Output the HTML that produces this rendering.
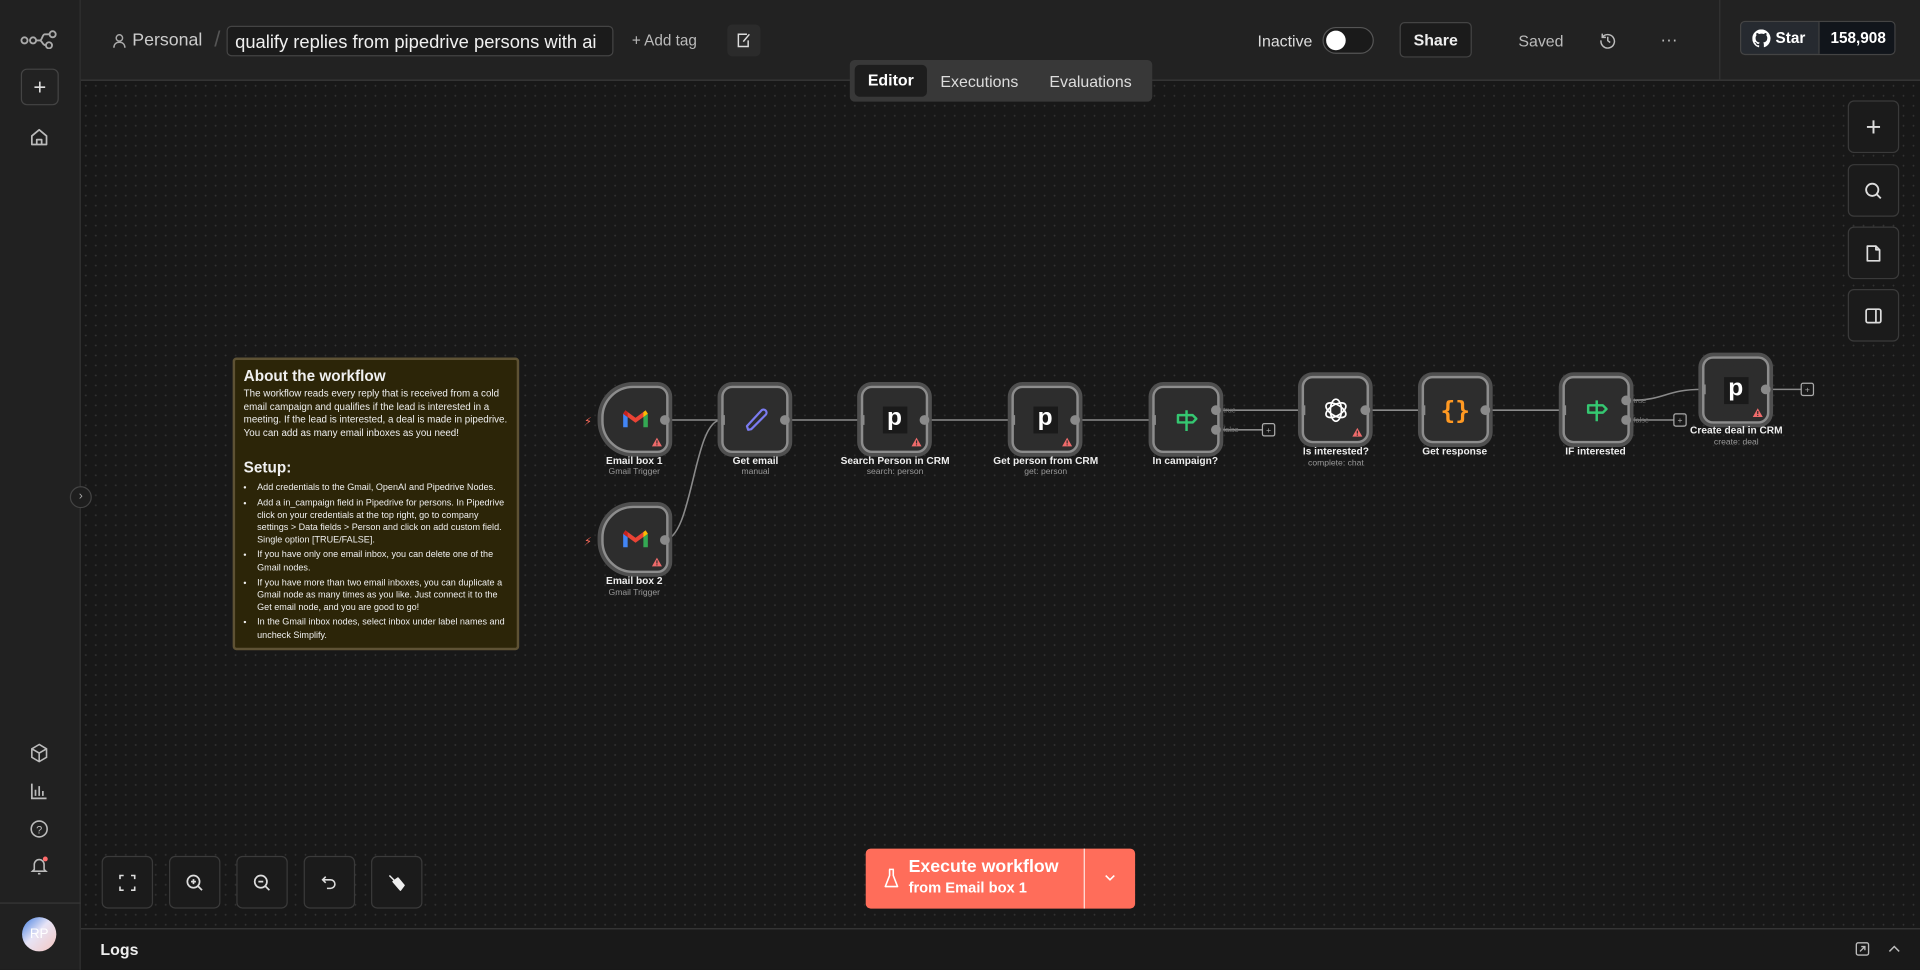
<!DOCTYPE html>
<html><head><meta charset="utf-8"><style>
*{box-sizing:border-box;margin:0;padding:0}
html,body{width:1920px;height:970px;overflow:hidden;background:#181818;font-family:"Liberation Sans",sans-serif;color:#ddd}
.s{position:absolute;left:0;top:0;width:1568px;height:792px;transform:scale(1.22449);transform-origin:0 0}
.a{position:absolute}
.side{left:0;top:0;width:66px;height:792px;background:#212121;border-right:1px solid #333}
.hdr{left:66px;top:0;width:1502px;height:66px;background:#222;border-bottom:1px solid #3a3a3a}
.canvas{left:66px;top:66px;width:1502px;height:692px;background-color:#181818;background-image:radial-gradient(circle,#333 0.6px,transparent 0.8px);background-size:8.166px 8.166px}
.btn{position:absolute;border:1px solid #3a3a3a;border-radius:5px;background:#1b1b1b;display:flex;align-items:center;justify-content:center}
.node{position:absolute;width:55px;height:55px;border-radius:9px;background:#2d2d2d;border:2px solid #8d8d8d;box-shadow:0 0 0 3px #4f4f4f;display:flex;align-items:center;justify-content:center}
.trig{border-radius:26px 9px 9px 26px}
.lbl{position:absolute;width:160px;text-align:center;font-size:8.3px;font-weight:bold;color:#eee}
.sub{position:absolute;width:160px;text-align:center;font-size:7px;color:#999}
.warn{position:absolute;right:3px;bottom:3px}
.pp{width:20px;height:22px;background:#1a1a1a;color:#fff;font-weight:bold;font-size:20px;line-height:19px;text-align:center;font-family:"Liberation Sans",sans-serif}
</style></head><body><div class="s">

<div class="a canvas"></div>

<!-- sidebar -->
<div class="a side">
 <svg class="a" style="left:16px;top:24px" width="32" height="16" viewBox="0 0 32 16"><g fill="none" stroke="#aaa" stroke-width="1.5"><circle cx="4" cy="9" r="2.5"/><circle cx="11" cy="9" r="2.5"/><circle cx="27" cy="4" r="2.5"/><circle cx="24" cy="13" r="2.5"/><path d="M13.5 9h3c2 0 2-5 4-5h4M16.5 9c2 0 2 4 5 4"/></g></svg>
 <div class="btn" style="left:17px;top:56px;width:31px;height:30px;background:#222;border-color:#444"><span style="font-size:18px;color:#ddd;line-height:1">+</span></div>
 <svg class="a" style="left:24px;top:104px" width="16" height="16" viewBox="0 0 16 16"><path d="M2 7L8 2l6 5v7H2z M6 14V10h4v4" fill="none" stroke="#bbb" stroke-width="1.4" stroke-linejoin="round"/></svg>
 <svg class="a" style="left:24px;top:607px" width="16" height="16" viewBox="0 0 16 16"><path d="M8 1l6 3.5v7L8 15 2 11.5v-7z M2 4.5L8 8l6-3.5M8 8v7" fill="none" stroke="#bbb" stroke-width="1.3"/></svg>
 <svg class="a" style="left:24px;top:638px" width="16" height="16" viewBox="0 0 16 16"><path d="M2 2v12h12M5 12V7M8 12V4M11 12V8" fill="none" stroke="#bbb" stroke-width="1.4"/></svg>
 <svg class="a" style="left:24px;top:669px" width="16" height="16" viewBox="0 0 16 16"><circle cx="8" cy="8" r="6.5" fill="none" stroke="#bbb" stroke-width="1.3"/><text x="8" y="11.5" font-size="9" text-anchor="middle" fill="#bbb" font-family="Liberation Sans">?</text></svg>
 <svg class="a" style="left:24px;top:699px" width="16" height="16" viewBox="0 0 16 16"><path d="M4 11V7a4 4 0 018 0v4l1.5 1.5h-11z M7 14.5h2" fill="none" stroke="#bbb" stroke-width="1.3"/><circle cx="13" cy="2.5" r="2" fill="#ff6b6b"/></svg>
 <div class="a" style="left:0;top:737px;width:66px;height:1px;background:#383838"></div>
 <div class="a" style="left:18px;top:749px;width:28px;height:28px;border-radius:50%;background:linear-gradient(135deg,#3f7ce0 0%,#e7e4f6 45%,#f4c6c0 100%);color:#fff;font-size:11px;display:flex;align-items:center;justify-content:center">RP</div>
 <div class="a" style="left:57px;top:397px;width:18px;height:18px;border-radius:50%;background:#1e1e1e;border:1px solid #444;color:#aaa;font-size:10px;text-align:center;line-height:15px">›</div>
</div>

<!-- header -->
<div class="a hdr">
 <svg class="a" style="left:26px;top:27px" width="11" height="13" viewBox="0 0 11 13"><circle cx="5.5" cy="4" r="2.6" fill="none" stroke="#aaa" stroke-width="1.2"/><path d="M1 12c0-3 2-4.5 4.5-4.5S10 9 10 12" fill="none" stroke="#aaa" stroke-width="1.2"/></svg>
 <div class="a" style="left:42px;top:25px;font-size:14.5px;color:#ccc">Personal</div>
 <div class="a" style="left:109px;top:22px;font-size:18px;color:#555">/</div>
 <div class="a" style="left:119px;top:21px;width:316px;height:25px;border:1px solid #444;border-radius:4px;background:#1b1b1b;font-size:15px;color:#f0f0f0;padding:4px 0 0 6px;white-space:nowrap;overflow:hidden">qualify replies from pipedrive persons with ai</div>
 <div class="a" style="left:450px;top:26px;font-size:12.5px;color:#bbb">+ Add tag</div>
 <div class="a" style="left:528px;top:20px;width:27px;height:26px;border-radius:4px;background:#2b2b2b"><svg style="position:absolute;left:7px;top:6px" width="13" height="14" viewBox="0 0 13 14"><path d="M9 2H2v10h8V7 M6 8l5-6" fill="none" stroke="#ddd" stroke-width="1.2"/></svg></div>
 <div class="a" style="left:961px;top:26px;font-size:13px;color:#ddd">Inactive</div>
 <div class="a" style="left:1014px;top:22px;width:42px;height:22px;border-radius:11px;background:#1a1a1a;border:1px solid #555"><div style="position:absolute;left:2px;top:2px;width:16px;height:16px;border-radius:50%;background:#fff"></div></div>
 <div class="a" style="left:1077px;top:18px;width:59px;height:29px;border:1px solid #444;border-radius:4px;background:#1b1b1b;font-size:13px;font-weight:bold;color:#eee;text-align:center;line-height:27px">Share</div>
 <div class="a" style="left:1174px;top:26px;font-size:13px;color:#bbb">Saved</div>
 <svg class="a" style="left:1240px;top:26px" width="14" height="14" viewBox="0 0 14 14"><path d="M2.5 4.5A5.5 5.5 0 1 1 1.5 7 M2.5 1.5v3h3 M7 4v3.2l2 1.5" fill="none" stroke="#bbb" stroke-width="1.2"/></svg>
 <div class="a" style="left:1290px;top:24px;font-size:14px;color:#bbb">···</div>
 <div class="a" style="left:1338px;top:0;width:1px;height:66px;background:#333"></div>
 <div class="a" style="left:1355px;top:17px;width:127px;height:28px;border:1px solid #444;border-radius:4px;background:#262a30;overflow:hidden">
  <svg style="position:absolute;left:9px;top:6px" width="15" height="15" viewBox="0 0 16 16"><path fill="#fff" d="M8 0a8 8 0 0 0-2.5 15.6c.4 0 .5-.2.5-.4v-1.5c-2.2.5-2.7-1-2.7-1-.4-.9-.9-1.2-.9-1.2-.7-.5.1-.5.1-.5.8.1 1.2.8 1.2.8.7 1.3 1.9.9 2.3.7.1-.5.3-.9.5-1.1-1.8-.2-3.6-.9-3.6-4 0-.9.3-1.6.8-2.1-.1-.2-.4-1 .1-2.1 0 0 .7-.2 2.2.8a7.5 7.5 0 0 1 4 0c1.5-1 2.2-.8 2.2-.8.4 1.1.2 1.9.1 2.1.5.6.8 1.3.8 2.1 0 3.1-1.9 3.8-3.6 4 .3.3.6.8.6 1.5v2.2c0 .2.1.5.6.4A8 8 0 0 0 8 0z"/></svg>
  <div style="position:absolute;left:28px;top:6px;font-size:12.5px;font-weight:bold;color:#fff">Star</div>
  <div style="position:absolute;left:63px;top:0;width:64px;height:28px;background:#11151b;border-left:1px solid #444;font-size:12.5px;font-weight:bold;color:#fff;text-align:center;line-height:27px">158,908</div>
 </div>
</div>

<!-- tabs -->
<div class="a" style="left:694px;top:49px;width:247px;height:34px;background:#383838;border-radius:4px">
 <div class="a" style="left:4px;top:4px;width:59px;height:26px;background:#1d1d1d;border-radius:4px;font-size:13px;font-weight:bold;color:#fff;text-align:center;line-height:26px">Editor</div>
 <div class="a" style="left:74px;top:10px;font-size:13px;color:#ddd">Executions</div>
 <div class="a" style="left:163px;top:10px;font-size:13px;color:#ddd">Evaluations</div>
</div>

<!-- right tools -->
<div class="btn" style="left:1509px;top:82px;width:42px;height:43px"><span style="font-size:22px;color:#ddd">+</span></div>
<div class="btn" style="left:1509px;top:134px;width:42px;height:43px"><svg width="16" height="16" viewBox="0 0 16 16"><circle cx="7" cy="7" r="5" fill="none" stroke="#ddd" stroke-width="1.5"/><path d="M10.5 10.5L14 14" stroke="#ddd" stroke-width="1.5"/></svg></div>
<div class="btn" style="left:1509px;top:185px;width:42px;height:43px"><svg width="16" height="16" viewBox="0 0 16 16"><path d="M3 2h7l3 3v9H3z M10 2v3h3" fill="none" stroke="#ddd" stroke-width="1.4" stroke-linejoin="round"/></svg></div>
<div class="btn" style="left:1509px;top:236px;width:42px;height:43px"><svg width="16" height="16" viewBox="0 0 16 16"><rect x="2" y="2.5" width="12" height="11" rx="1.5" fill="none" stroke="#ddd" stroke-width="1.4"/><path d="M10 2.5v11" stroke="#ddd" stroke-width="1.4"/></svg></div>

<!-- sticky -->
<div class="a" style="left:190px;top:292px;width:234px;height:239px;background:#2c2508;border:2px solid #5e5234;border-radius:3px;padding:6px 7px;color:#f0f0f0;overflow:hidden">
 <div style="font-size:12.5px;font-weight:bold">About the workflow</div>
 <div style="font-size:8px;line-height:10.6px;margin-top:3px">The workflow reads every reply that is received from a cold email campaign and qualifies if the lead is interested in a meeting. If the lead is interested, a deal is made in pipedrive. You can add as many email inboxes as you need!</div>
 <div style="font-size:12.5px;font-weight:bold;margin-top:16px">Setup:</div>
 <ul style="font-size:7.4px;line-height:10.2px;margin:4px 0 0 11px">
  <li style="margin-bottom:2px">Add credentials to the Gmail, OpenAI and Pipedrive Nodes.</li>
  <li style="margin-bottom:2px">Add a in_campaign field in Pipedrive for persons. In Pipedrive click on your credentials at the top right, go to company settings &gt; Data fields &gt; Person and click on add custom field. Single option [TRUE/FALSE].</li>
  <li style="margin-bottom:2px">If you have only one email inbox, you can delete one of the Gmail nodes.</li>
  <li style="margin-bottom:2px">If you have more than two email inboxes, you can duplicate a Gmail node as many times as you like. Just connect it to the Get email node, and you are good to go!</li>
  <li>In the Gmail inbox nodes, select inbox under label names and uncheck Simplify.</li>
 </ul>
</div>

<!-- connections -->
<svg class="a" style="left:0;top:0" width="1568" height="792" viewBox="0 0 1568 792">
 <g stroke="#8a8a8a" stroke-width="1.3" fill="none">
  <path d="M546 343H589"/><path d="M542 441C566 441 566 343 589 343"/>
  <path d="M644 343H703"/><path d="M758 343H826"/><path d="M881 343H941"/>
  <path d="M996 335H1063"/><path d="M996 351H1031"/>
  <path d="M1118 335H1161"/><path d="M1216 335H1276"/>
  <path d="M1331 327C1360 327 1360 318 1390 318"/><path d="M1331 343H1367"/>
  <path d="M1445 318H1471"/>
 </g>
 <g fill="none" stroke="#aaa" stroke-width="1"><rect x="1031" y="346" width="10" height="10" rx="1.5"/><rect x="1367" y="338" width="10" height="10" rx="1.5"/><rect x="1471" y="313" width="10" height="10" rx="1.5"/></g>
 <g fill="#aaa" font-size="7" font-family="Liberation Sans" text-anchor="middle"><text x="1036" y="353.5">+</text><text x="1372" y="345.5">+</text><text x="1476" y="320.5">+</text></g>
 <g fill="#777" font-size="6" font-family="Liberation Sans"><text x="999" y="337">true</text><text x="999" y="353">false</text><text x="1334" y="329">true</text><text x="1334" y="345">false</text></g>
 <g fill="#ff6b5b" font-size="9" font-family="DejaVu Sans"><text x="477" y="347">⚡</text><text x="477" y="445">⚡</text></g>
</svg>

<!-- nodes -->
<svg width="0" height="0" style="position:absolute"><defs>
 <symbol id="gm" viewBox="0 0 24 18"><path d="M1 4v12h4V7z" fill="#4285f4"/><path d="M19 7v9h4V4z" fill="#34a853"/><path d="M1 4l11 8 11-8-2-3-9 6.5L3 1z" fill="#ea4335"/><path d="M19 7l4-3-2-3-2 1.5z" fill="#fbbc04"/><path d="M1 4l4 3V2.5L3 1z" fill="#c5221f"/></symbol>
 <symbol id="wn" viewBox="0 0 10 9"><path d="M5 0.5L9.6 8.5H0.4z" fill="#f06b6b"/><path d="M5 3v2.8" stroke="#2d2d2d" stroke-width="1.1"/><circle cx="5" cy="7.1" r="0.6" fill="#2d2d2d"/></symbol>
 <symbol id="sg" viewBox="0 0 22 22"><path d="M11 3v17 M4 7h12l3 3-3 3H4z" fill="none" stroke="#35c771" stroke-width="2" stroke-linejoin="round"/></symbol>
</defs></svg>

<div class="node trig" style="left:491px;top:315px"><svg width="22" height="17"><use href="#gm"/></svg><svg class="warn" width="9" height="8"><use href="#wn"/></svg></div>
<div class="lbl" style="left:438px;top:371px">Email box 1</div><div class="sub" style="left:438px;top:382px">Gmail Trigger</div>
<div class="node trig" style="left:491px;top:413px"><svg width="22" height="17"><use href="#gm"/></svg><svg class="warn" width="9" height="8"><use href="#wn"/></svg></div>
<div class="lbl" style="left:438px;top:469px">Email box 2</div><div class="sub" style="left:438px;top:481px">Gmail Trigger</div>

<div class="node" style="left:589px;top:315px"><svg width="24" height="24" viewBox="0 0 24 24"><path d="M6 20l-1 -3L17 4a2.5 2.5 0 013.5 3.5L8.5 19.5z" fill="none" stroke="#7b7bf0" stroke-width="1.8" stroke-linejoin="round"/></svg></div>
<div class="lbl" style="left:537px;top:371px">Get email</div><div class="sub" style="left:537px;top:382px">manual</div>

<div class="node" style="left:703px;top:315px"><div class="pp">p</div><svg class="warn" width="9" height="8"><use href="#wn"/></svg></div>
<div class="lbl" style="left:651px;top:371px">Search Person in CRM</div><div class="sub" style="left:651px;top:382px">search: person</div>

<div class="node" style="left:826px;top:315px"><div class="pp">p</div><svg class="warn" width="9" height="8"><use href="#wn"/></svg></div>
<div class="lbl" style="left:774px;top:371px">Get person from CRM</div><div class="sub" style="left:774px;top:382px">get: person</div>

<div class="node" style="left:941px;top:315px"><svg width="22" height="22"><use href="#sg"/></svg></div>
<div class="lbl" style="left:888px;top:371px">In campaign?</div>

<div class="node" style="left:1063px;top:307px"><svg width="24" height="24" viewBox="0 0 24 24"><g fill="none" stroke="#fff" stroke-width="1.4"><ellipse cx="12" cy="12" rx="4.5" ry="9"/><ellipse cx="12" cy="12" rx="4.5" ry="9" transform="rotate(60 12 12)"/><ellipse cx="12" cy="12" rx="4.5" ry="9" transform="rotate(120 12 12)"/></g></svg><svg class="warn" width="9" height="8"><use href="#wn"/></svg></div>
<div class="lbl" style="left:1011px;top:363px">Is interested?</div><div class="sub" style="left:1011px;top:375px">complete: chat</div>

<div class="node" style="left:1161px;top:307px"><span style="color:#ff9922;font-size:20px;font-weight:bold;font-family:'DejaVu Sans Mono',monospace">{}</span></div>
<div class="lbl" style="left:1108px;top:363px">Get response</div>

<div class="node" style="left:1276px;top:307px"><svg width="22" height="22"><use href="#sg"/></svg></div>
<div class="lbl" style="left:1223px;top:363px">IF interested</div>

<div class="node" style="left:1390px;top:291px"><div class="pp">p</div><svg class="warn" width="9" height="8"><use href="#wn"/></svg></div>
<div class="lbl" style="left:1338px;top:346px">Create deal in CRM</div><div class="sub" style="left:1338px;top:358px">create: deal</div>

<!-- handles -->
<svg class="a" style="left:0;top:0" width="1568" height="792"><g fill="#8a8a8a">
 <circle cx="543" cy="343" r="4"/><circle cx="543" cy="441" r="4"/><circle cx="641" cy="343" r="4"/><circle cx="755" cy="343" r="4"/><circle cx="878" cy="343" r="4"/>
 <circle cx="993" cy="335" r="4"/><circle cx="993" cy="351" r="4"/><circle cx="1115" cy="335" r="4"/><circle cx="1213" cy="335" r="4"/>
 <circle cx="1328" cy="327" r="4"/><circle cx="1328" cy="343" r="4"/><circle cx="1442" cy="318" r="4"/>
 <rect x="589" y="339" width="3" height="8"/><rect x="703" y="339" width="3" height="8"/><rect x="826" y="339" width="3" height="8"/><rect x="941" y="339" width="3" height="8"/>
 <rect x="1063" y="331" width="3" height="8"/><rect x="1161" y="331" width="3" height="8"/><rect x="1276" y="331" width="3" height="8"/><rect x="1390" y="314" width="3" height="8"/>
</g></svg>

<!-- bottom controls -->
<div class="btn" style="left:83px;top:699px;width:42px;height:43px"><svg width="14" height="14" viewBox="0 0 14 14"><path d="M1 4V1h3M10 1h3v3M13 10v3h-3M4 13H1v-3" fill="none" stroke="#ddd" stroke-width="1.3"/></svg></div>
<div class="btn" style="left:138px;top:699px;width:42px;height:43px"><svg width="16" height="16" viewBox="0 0 16 16"><circle cx="7" cy="7" r="5" fill="none" stroke="#ddd" stroke-width="1.4"/><path d="M10.5 10.5L14 14M5 7h4M7 5v4" stroke="#ddd" stroke-width="1.4"/></svg></div>
<div class="btn" style="left:193px;top:699px;width:42px;height:43px"><svg width="16" height="16" viewBox="0 0 16 16"><circle cx="7" cy="7" r="5" fill="none" stroke="#ddd" stroke-width="1.4"/><path d="M10.5 10.5L14 14M5 7h4" stroke="#ddd" stroke-width="1.4"/></svg></div>
<div class="btn" style="left:248px;top:699px;width:42px;height:43px"><svg width="14" height="14" viewBox="0 0 14 14"><path d="M4 2L1.5 4.5 4 7 M1.5 4.5H8a3.5 3.5 0 010 7H5" fill="none" stroke="#ddd" stroke-width="1.3"/></svg></div>
<div class="btn" style="left:303px;top:699px;width:42px;height:43px"><svg width="16" height="16" viewBox="0 0 16 16"><path d="M2 2l4 4M5 7l4-3 5 6-3 4z" fill="#eee" stroke="#eee" stroke-width="1.2" stroke-linejoin="round"/></svg></div>

<div class="a" style="left:707px;top:693px;width:220px;height:49px;background:#ff6d5a;border-radius:4px">
 <svg style="position:absolute;left:15px;top:16px" width="12" height="17" viewBox="0 0 12 17"><path d="M4 1h4M4.5 1v5L1 15h10L7.5 6V1" fill="none" stroke="#fff" stroke-width="1.3" stroke-linejoin="round"/></svg>
 <div style="position:absolute;left:35px;top:7px;font-size:14.5px;font-weight:bold;color:#fff">Execute workflow</div>
 <div style="position:absolute;left:35px;top:25px;font-size:12px;font-weight:bold;color:#fff">from Email box 1</div>
 <div style="position:absolute;left:178px;top:0;width:1px;height:49px;background:#fff;opacity:.8"></div>
 <svg style="position:absolute;left:195px;top:21px" width="9" height="6" viewBox="0 0 9 6"><path d="M1 1l3.5 3.5L8 1" fill="none" stroke="#fff" stroke-width="1.3"/></svg>
</div>

<!-- logs -->
<div class="a" style="left:66px;top:758px;width:1502px;height:34px;background:#191919;border-top:1px solid #3a3a3a">
 <div style="position:absolute;left:16px;top:9px;font-size:13px;font-weight:bold;color:#eee">Logs</div>
 <svg style="position:absolute;left:1449px;top:10px" width="12" height="12" viewBox="0 0 12 12"><rect x="1" y="1" width="10" height="10" rx="1.5" fill="none" stroke="#bbb" stroke-width="1.1"/><path d="M4 8l4-4M5 4h3v3" fill="none" stroke="#bbb" stroke-width="1.1"/></svg>
 <svg style="position:absolute;left:1476px;top:12px" width="10" height="7" viewBox="0 0 10 7"><path d="M1 6l4-4 4 4" fill="none" stroke="#bbb" stroke-width="1.2"/></svg>
</div>

</div></body></html>
